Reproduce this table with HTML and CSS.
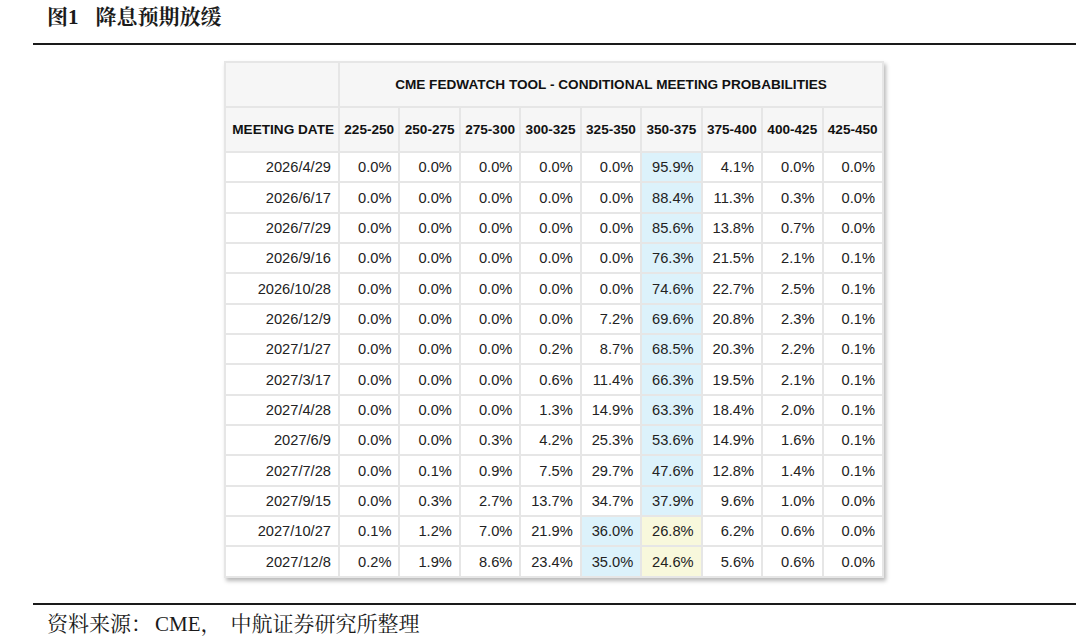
FILE: index.html
```html
<!DOCTYPE html>
<html lang="zh-CN">
<head>
<meta charset="utf-8">
<title>图1 降息预期放缓</title>
<link rel="stylesheet" href="styles.css">
</head>
<body>
<div class="figure">
  <div class="title"><span class="num">图1</span>降息预期放缓</div>
  <div class="chart">
    <table class="fw">
      <colgroup>
        <col class="c-date">
        <col class="c-val"><col class="c-val"><col class="c-val"><col class="c-val"><col class="c-val"><col class="c-val"><col class="c-val"><col class="c-val"><col class="c-val">
      </colgroup>
      <thead>
        <tr class="h1"><th></th><th colspan="9">CME FEDWATCH TOOL - CONDITIONAL MEETING PROBABILITIES</th></tr>
        <tr class="h2"><th>MEETING DATE</th><th>225-250</th><th>250-275</th><th>275-300</th><th>300-325</th><th>325-350</th><th>350-375</th><th>375-400</th><th>400-425</th><th>425-450</th></tr>
      </thead>
      <tbody>
        <tr><td>2026/4/29</td><td>0.0%</td><td>0.0%</td><td>0.0%</td><td>0.0%</td><td>0.0%</td><td class="blue">95.9%</td><td>4.1%</td><td>0.0%</td><td>0.0%</td></tr>
        <tr><td>2026/6/17</td><td>0.0%</td><td>0.0%</td><td>0.0%</td><td>0.0%</td><td>0.0%</td><td class="blue">88.4%</td><td>11.3%</td><td>0.3%</td><td>0.0%</td></tr>
        <tr><td>2026/7/29</td><td>0.0%</td><td>0.0%</td><td>0.0%</td><td>0.0%</td><td>0.0%</td><td class="blue">85.6%</td><td>13.8%</td><td>0.7%</td><td>0.0%</td></tr>
        <tr><td>2026/9/16</td><td>0.0%</td><td>0.0%</td><td>0.0%</td><td>0.0%</td><td>0.0%</td><td class="blue">76.3%</td><td>21.5%</td><td>2.1%</td><td>0.1%</td></tr>
        <tr><td>2026/10/28</td><td>0.0%</td><td>0.0%</td><td>0.0%</td><td>0.0%</td><td>0.0%</td><td class="blue">74.6%</td><td>22.7%</td><td>2.5%</td><td>0.1%</td></tr>
        <tr><td>2026/12/9</td><td>0.0%</td><td>0.0%</td><td>0.0%</td><td>0.0%</td><td>7.2%</td><td class="blue">69.6%</td><td>20.8%</td><td>2.3%</td><td>0.1%</td></tr>
        <tr><td>2027/1/27</td><td>0.0%</td><td>0.0%</td><td>0.0%</td><td>0.2%</td><td>8.7%</td><td class="blue">68.5%</td><td>20.3%</td><td>2.2%</td><td>0.1%</td></tr>
        <tr><td>2027/3/17</td><td>0.0%</td><td>0.0%</td><td>0.0%</td><td>0.6%</td><td>11.4%</td><td class="blue">66.3%</td><td>19.5%</td><td>2.1%</td><td>0.1%</td></tr>
        <tr><td>2027/4/28</td><td>0.0%</td><td>0.0%</td><td>0.0%</td><td>1.3%</td><td>14.9%</td><td class="blue">63.3%</td><td>18.4%</td><td>2.0%</td><td>0.1%</td></tr>
        <tr><td>2027/6/9</td><td>0.0%</td><td>0.0%</td><td>0.3%</td><td>4.2%</td><td>25.3%</td><td class="blue">53.6%</td><td>14.9%</td><td>1.6%</td><td>0.1%</td></tr>
        <tr><td>2027/7/28</td><td>0.0%</td><td>0.1%</td><td>0.9%</td><td>7.5%</td><td>29.7%</td><td class="blue">47.6%</td><td>12.8%</td><td>1.4%</td><td>0.1%</td></tr>
        <tr><td>2027/9/15</td><td>0.0%</td><td>0.3%</td><td>2.7%</td><td>13.7%</td><td>34.7%</td><td class="blue">37.9%</td><td>9.6%</td><td>1.0%</td><td>0.0%</td></tr>
        <tr><td>2027/10/27</td><td>0.1%</td><td>1.2%</td><td>7.0%</td><td>21.9%</td><td class="blue">36.0%</td><td class="yellow">26.8%</td><td>6.2%</td><td>0.6%</td><td>0.0%</td></tr>
        <tr><td>2027/12/8</td><td>0.2%</td><td>1.9%</td><td>8.6%</td><td>23.4%</td><td class="blue">35.0%</td><td class="yellow">24.6%</td><td>5.6%</td><td>0.6%</td><td>0.0%</td></tr>
      </tbody>
    </table>
  </div>
  <div class="source">资料来源：<span class="latin">CME，</span><span class="org">中航证券研究所整理</span></div>
</div>
</body>
</html>
```
FILE: styles.css
```css
html, body {
  margin: 0;
  padding: 0;
  background: #ffffff;
}

.figure {
  margin: 0 4px 0 33px;
  color: #1a1a1a;
  font-family: "Liberation Serif", "Noto Serif CJK SC", "Noto Sans CJK SC", serif;
}

.title {
  height: 43px;
  line-height: 35px;
  padding-left: 14px;
  font-size: 21px;
  font-weight: bold;
  border-bottom: 2px solid #1a1a1a;
}

.title .num {
  margin-right: 17px;
}

.chart {
  padding: 16px 0 25px 191px;
  border-bottom: 2px solid #1a1a1a;
}

.fw {
  border-collapse: collapse;
  width: 658px;
  table-layout: fixed;
  font-family: "Liberation Sans", Arial, sans-serif;
  color: #222222;
  box-shadow: 2px 3px 4px rgba(0, 0, 0, 0.28);
  background: #ffffff;
}

.c-date { width: 114px; }
.c-val { width: 60.44px; }

.fw th,
.fw td {
  border: 2px solid #e6e6e6;
  padding: 0 7px 0 0;
  white-space: nowrap;
}

.fw th {
  background: #f6f6f6;
  color: #111111;
  font-size: 13.6px;
  font-weight: bold;
  text-align: center;
  padding: 0;
}

.fw .h1 th { height: 43px; }
.fw .h2 th { height: 43px; }
.fw .h2 th:first-child { text-align: right; padding-right: 4px; }

.fw td {
  height: 28.35px;
  font-size: 14.67px;
  text-align: right;
}

.fw td.blue { background: #dcf2fb; }
.fw td.yellow { background: #f8f8dc; }

.source {
  padding-left: 14px;
  line-height: 38px;
  font-size: 21px;
}

.source .latin {
  padding-left: 3px;
}

.source .org {
  padding-left: 9px;
}
```
